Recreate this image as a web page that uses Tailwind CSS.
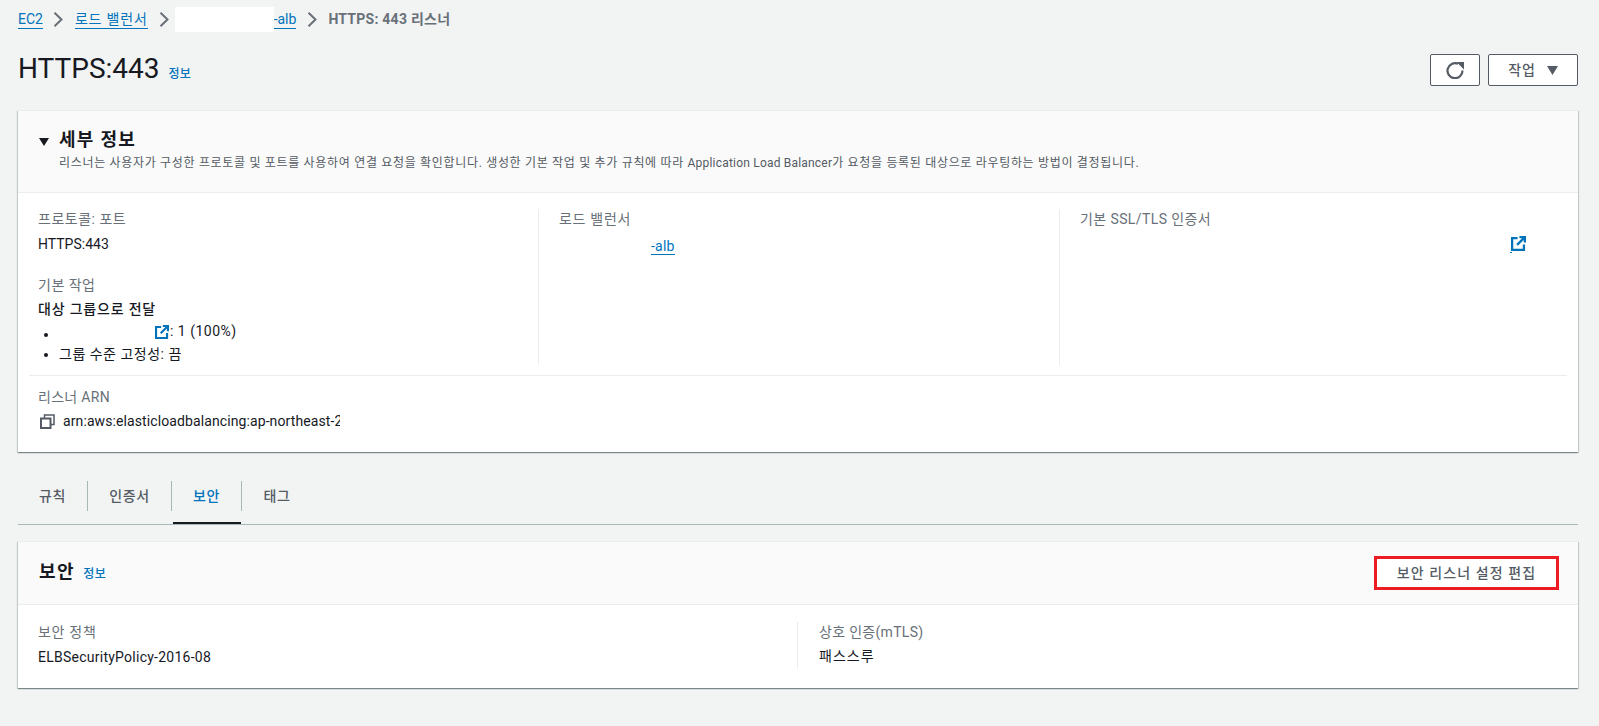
<!DOCTYPE html>
<html lang="ko">
<head>
    <meta charset="UTF-8">
    <title>HTTPS:443</title>
    <script src="https://cdn.jsdelivr.net/npm/@tailwindcss/browser@4"></script>
</head>
<body class="bg-[#f2f3f3] text-[#16191f] text-[14px] font-['Roboto','Noto_Sans_CJK_KR',sans-serif] overflow-hidden">
    <div class="w-[1599px] h-[726px] pl-[18px] pr-[21px]">

        <!-- Breadcrumb -->
        <nav class="h-[38px] flex items-center text-[14px] leading-[20px]">
            <a class="text-[#0073bb] border-b border-[#0073bb] leading-[18px]">EC2</a>
            <svg class="w-[10px] h-[15px] ml-[10px] mr-[12px]" viewBox="0 0 10 15" fill="none" stroke="#687078" stroke-width="2"><path d="M1.5 .7l7 6.8-7 6.8"/></svg>
            <a class="text-[#0073bb] border-b border-[#0073bb] leading-[18px] tracking-[0.8px]">로드 밸런서</a>
            <svg class="w-[10px] h-[15px] ml-[11px] mr-[6px]" viewBox="0 0 10 15" fill="none" stroke="#687078" stroke-width="2"><path d="M1.5 .7l7 6.8-7 6.8"/></svg>
            <div class="w-[99px] h-[25px] bg-white"></div>
            <a class="text-[#0073bb] border-b border-[#0073bb] leading-[18px]">-alb</a>
            <svg class="w-[10px] h-[15px] ml-[11px] mr-[11px]" viewBox="0 0 10 15" fill="none" stroke="#687078" stroke-width="2"><path d="M1.5 .7l7 6.8-7 6.8"/></svg>
            <span class="text-[#687078] font-bold tracking-[0.25px]">HTTPS: 443 리스너</span>
        </nav>

        <!-- Page header -->
        <header class="h-[72px] flex items-start justify-between">
            <div class="flex items-baseline pt-[12px]">
                <h1 class="text-[28px] leading-[38px] text-[#16191f]">HTTPS:443</h1>
                <a class="ml-[9px] text-[12px] font-medium tracking-[0.3px] text-[#0073bb]">정보</a>
            </div>
            <div class="flex gap-[8px] pt-[16px]">
                <button class="w-[50px] h-[32px] bg-white border border-[#545b64] rounded-[2px] flex items-center justify-center">
                    <svg class="w-[19px] h-[18px]" viewBox="0 0 19 18" fill="none"><path d="M16.5 9.5A7.5 7.5 0 1 1 12 2.8" stroke="#545b64" stroke-width="2.2"/><path d="M10.5 1H18v7.5z" fill="#545b64"/></svg>
                </button>
                <button class="w-[90px] h-[32px] bg-white border border-[#545b64] rounded-[2px] flex items-center justify-center gap-[11px] text-[#545b64] font-medium tracking-[0.8px]">
                    작업
                    <svg class="w-[11px] h-[9px]" viewBox="0 0 11 9" fill="#545b64"><path d="M0 0h11L5.5 9z"/></svg>
                </button>
            </div>
        </header>

        <!-- Details card -->
        <section class="h-[342px] bg-white border-t border-[#eaeded] shadow-[0_1px_1px_0_rgba(0,28,36,0.3),1px_1px_1px_0_rgba(0,28,36,0.15),-1px_1px_1px_0_rgba(0,28,36,0.15)]">
            <div class="h-[82px] bg-[#fafafa] border-b border-[#eaeded] pl-[21px] pt-[18px] flex">
                <svg class="w-[10px] h-[8px] mt-[9px] mr-[10px] shrink-0" viewBox="0 0 10 8" fill="#16191f"><path d="M0 0h10L5 8z"/></svg>
                <div>
                    <h2 class="text-[18px] leading-[22px] font-bold tracking-[1.3px]">세부 정보</h2>
                    <p class="text-[12px] leading-[16px] mt-[4px] text-[#545b64] tracking-[0.68px]">리스너는 사용자가 구성한 프로토콜 및 포트를 사용하여 연결 요청을 확인합니다. 생성한 기본 작업 및 추가 규칙에 따라 <span class="tracking-[0.2px]">Application Load Balancer</span>가 요청을 등록된 대상으로 라우팅하는 방법이 결정됩니다.</p>
                </div>
            </div>

            <div class="pt-[16px] px-[11px]">
                <div class="grid grid-cols-[510px_521px_1fr] h-[156px]">
                    <div class="pl-[9px] border-r border-[#eaeded]">
                        <div class="text-[#687078] leading-[20px] tracking-[0.5px]">프로토콜: 포트</div>
                        <div class="leading-[20px] mt-[5px] text-[#16191f]">HTTPS:443</div>
                        <div class="text-[#687078] leading-[20px] mt-[21px] tracking-[0.5px]">기본 작업</div>
                        <div class="font-medium leading-[20px] mt-[4px] tracking-[0.8px]">대상 그룹으로 전달</div>
                        <ul class="list-disc pl-[21px] mt-[2px]">
                            <li class="leading-[21px]"><span class="inline-flex items-center pl-[96px] tracking-[0.5px]"><svg class="w-[14px] h-[14px] mr-px" viewBox="0 0 16 16" fill="none" stroke="#0073bb" stroke-width="2.4"><path d="M7 2.2H1.2v12.6H13.8V9"/><path d="M9 1.2h5.8V7M14.8 1.2L6.5 9.5"/></svg>: 1 (100%)</span></li>
                            <li class="leading-[19px] tracking-[0.5px]">그룹 수준 고정성: 끔</li>
                        </ul>
                    </div>
                    <div class="pl-[20px] border-r border-[#eaeded]">
                        <div class="text-[#687078] leading-[20px] tracking-[0.7px]">로드 밸런서</div>
                        <div class="leading-[20px] mt-[7px] pl-[92px]"><a class="text-[#0073bb] border-b border-[#0073bb] tracking-[0.2px]">-alb</a></div>
                    </div>
                    <div class="pl-[20px]">
                        <div class="text-[#687078] leading-[20px] tracking-[0.4px]">기본 SSL/TLS 인증서</div>
                        <div class="mt-[7px] pl-[431px]">
                            <svg class="w-[15px] h-[15px]" viewBox="0 0 16 16" fill="none" stroke="#0073bb" stroke-width="2.4"><path d="M7 2.2H1.2v12.6H13.8V9"/><path d="M9 1.2h5.8V7M14.8 1.2L6.5 9.5"/></svg>
                            <div class="w-[2px] h-px mt-[1px] -ml-[1px] bg-[#0073bb]"></div>
                        </div>
                    </div>
                </div>
                <div class="mt-[10px] border-t border-[#eaeded] pl-[9px] pt-[11px]">
                    <div class="text-[#687078] leading-[20px] tracking-[0.3px]">리스너 ARN</div>
                    <div class="flex items-center mt-[4px] leading-[20px]">
                        <svg class="w-[15px] h-[15px] ml-[2px] mr-[8px]" viewBox="0 0 15 15" fill="none" stroke="#545b64" stroke-width="2"><rect x="1" y="4.5" width="9.5" height="9.5"/><path d="M4.5 4V1H14v9.5h-3.5" stroke-width="1.5"/></svg>
                        <span class="w-[277px] overflow-hidden whitespace-nowrap text-[#16191f] tracking-[0.1px]">arn:aws:elasticloadbalancing:ap-northeast-2</span>
                    </div>
                </div>
            </div>
        </section>

        <!-- Tabs -->
        <div class="h-[72px] pt-[29px]">
            <div class="h-[44px] border-b border-[#aab7b8] flex font-medium text-[#545b64] leading-[20px] tracking-[0.6px]">
                <div class="w-[70px] h-[30px] flex items-center justify-center border-r border-[#aab7b8]">규칙</div>
                <div class="w-[84px] h-[30px] flex items-center justify-center border-r border-[#aab7b8]">인증서</div>
                <div class="relative w-[70px] h-[30px] flex items-center justify-center border-r border-[#aab7b8] text-[#0073bb]">보안
                    <div class="absolute left-[1px] right-0 top-[41px] h-[2px] bg-[#16191f]"></div>
                </div>
                <div class="w-[70px] h-[30px] flex items-center justify-center">태그</div>
            </div>
        </div>

        <!-- Security card -->
        <section class="h-[147px] mt-[17px] bg-white border-t border-[#eaeded] shadow-[0_1px_1px_0_rgba(0,28,36,0.3),1px_1px_1px_0_rgba(0,28,36,0.15),-1px_1px_1px_0_rgba(0,28,36,0.15)]">
            <div class="h-[63px] bg-[#fafafa] border-b border-[#eaeded] pl-[21px] pr-[19px] flex items-center justify-between">
                <div class="flex items-baseline pb-[2px]">
                    <h2 class="text-[18px] font-bold leading-[22px] tracking-[1.5px]">보안</h2>
                    <a class="ml-[8px] text-[12px] font-medium tracking-[0.6px] text-[#0073bb]">정보</a>
                </div>
                <button class="w-[185px] h-[34px] bg-white border-[3px] border-[#ed1c24] text-[#545b64] font-medium tracking-[1.1px]">보안 리스너 설정 편집</button>
            </div>
            <div class="grid grid-cols-[780px_1fr] pt-[17px]">
                <div class="pl-[20px] border-r border-[#eaeded] h-[46px]">
                    <div class="text-[#687078] leading-[20px] tracking-[0.7px]">보안 정책</div>
                    <div class="leading-[20px] mt-[5px] tracking-[0.25px]">ELBSecurityPolicy-2016-08</div>
                </div>
                <div class="pl-[21px]">
                    <div class="text-[#687078] leading-[20px] tracking-[0.3px]">상호 인증(mTLS)</div>
                    <div class="leading-[20px] mt-[4px] tracking-[1px]">패스스루</div>
                </div>
            </div>
        </section>
    </div>
</body>
</html>
